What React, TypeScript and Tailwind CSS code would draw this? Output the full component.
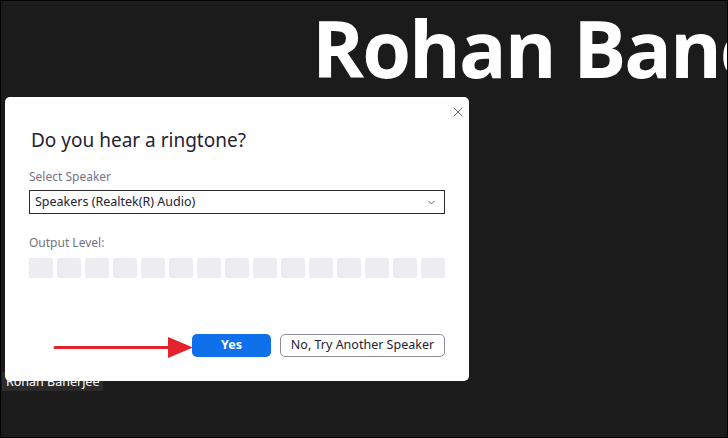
import { X, ChevronDown } from "lucide-react"

const levels = Array.from({ length: 15 }, (_, i) => i)

export default function App() {
  return (
    <div
      className="relative h-[438px] w-[728px] overflow-hidden border border-black bg-[#1b1b1b]"
      style={{ fontFamily: '"Noto Sans", "Open Sans", sans-serif' }}
    >
      {/* video tile name */}
      <div className="pl-[311px] pt-[0px]">
        <div
          className="whitespace-nowrap text-[79px] font-bold leading-[94px] tracking-[-2px] text-white"
          style={{ fontFamily: '"Open Sans", sans-serif' }}
        >
          Rohan Banerjee
        </div>
      </div>

      {/* name tag */}
      <div className="absolute left-[1px] top-[371px] bg-[#2b2b2b] px-[4px] text-[12.5px] leading-[19px] text-white">
        Rohan Banerjee
      </div>

      {/* dialog */}
      <div className="absolute left-[4px] top-[96px] h-[284px] w-[464px] rounded-[5px] bg-white">
        <button className="absolute right-[3px] top-[7px] text-[#555]">
          <X size={16} strokeWidth={1.3} />
        </button>

        <div className="flex flex-col px-[24px] pt-[30px]">
          <h1 className="ml-[2px] text-[19px] leading-[27px] text-[#232333]">Do you hear a ringtone?</h1>

          <div className="mt-[15px] text-[12px] leading-[16px] text-[#747487]">Select Speaker</div>
          <div className="mt-[5px] flex h-[24px] items-center justify-between border border-[#2b2b2b] px-[5px] text-[12.5px] text-[#232333]">
            <span>Speakers (Realtek(R) Audio)</span>
            <ChevronDown size={11} strokeWidth={2} className="mr-[2px] text-[#555]" />
          </div>

          <div className="mt-[21px] text-[12px] leading-[16px] text-[#747487]">Output Level:</div>
          <div className="mt-[7px] flex gap-[4px]">
            {levels.map(i => (
              <div key={i} className="h-[20px] w-[24px] rounded-[2px] bg-[#ededf1]" />
            ))}
          </div>

          <div className="mt-[56px] flex justify-end gap-[9px]">
            <button className="h-[23px] w-[79px] rounded-[5px] bg-[#0e71eb] text-[12.5px] font-bold text-white">
              Yes
            </button>
            <button className="h-[23px] w-[165px] rounded-[5px] border border-[#8e8e98] text-[12.5px] text-[#232333]">
              No, Try Another Speaker
            </button>
          </div>
        </div>
      </div>

      {/* annotation arrow */}
      <svg className="absolute left-[52px] top-[335px]" width="142" height="23" viewBox="0 0 142 23">
        <line x1="2" y1="11.5" x2="118" y2="11.5" stroke="#e3232c" strokeWidth="3" strokeLinecap="round" />
        <polygon points="115,1 140,11.5 115,22" fill="#e3232c" />
      </svg>
    </div>
  )
}
